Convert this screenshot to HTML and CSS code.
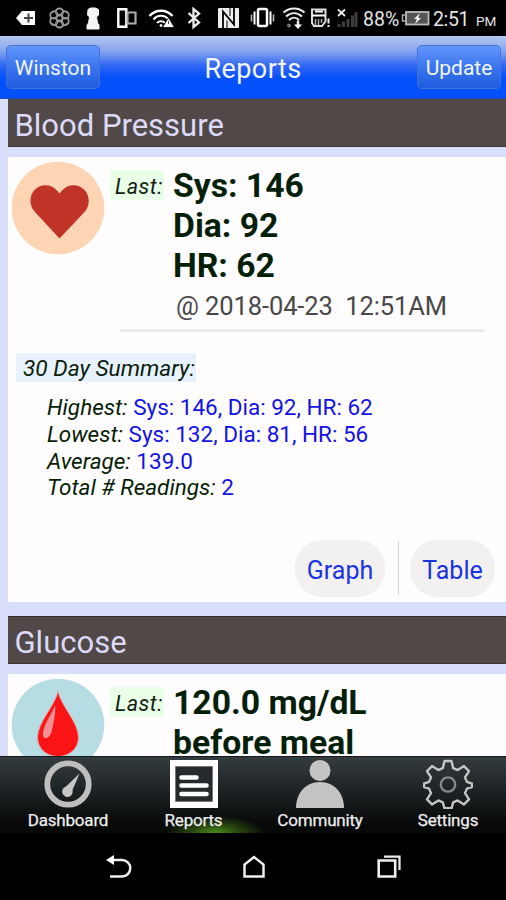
FILE: index.html
```html
<!DOCTYPE html>
<html lang="en">
<head>
<meta charset="utf-8">
<title>Reports</title>
<link rel="stylesheet" href="styles.css">
</head>
<body>
<div class="screen">
  <div class="status">
    <svg class="ico" width="42" height="36" viewBox="0 0 42 36"><path d="M16 18l6-7h13v14H22z" fill="#fff"/><path d="M24 18h9M28.500 13.500v9" stroke="#444" stroke-width="2"/></svg>
    <svg class="ico" width="36" height="36" viewBox="42 0 36 36" fill="none" stroke="#999" stroke-width="1.400"><path d="M59.500 8.500l9 4.800v9.600l-9 4.800-9-4.800v-9.600z"/><circle cx="59.500" cy="18" r="3.500"/><circle cx="59.500" cy="12" r="3.800"/><circle cx="59.500" cy="24" r="3.800"/><circle cx="54" cy="15" r="3.800"/><circle cx="65" cy="15" r="3.800"/><circle cx="54" cy="21.500" r="3.800"/><circle cx="65" cy="21.500" r="3.800"/></svg>
    <svg class="ico" width="32" height="36" viewBox="78 0 32 36"><path d="M88 9.500L90.500 8h5L98.500 9.500v5.500l-2 2 1 6 1.500 2V29h-12v-4l1.500-2 1-6-2-2z" fill="#f4f4f4" stroke="#f4f4f4" stroke-linejoin="round"/></svg>
    <svg class="ico" width="34" height="36" viewBox="110 0 34 36" fill="none"><path d="M118.300 9.200h8v17.600h-8z" stroke="#fff" stroke-width="2.400"/><path d="M127.500 12.500h8v11h-8z" stroke="#aaa" stroke-width="2.200"/></svg>
    <svg class="ico" width="36" height="36" viewBox="144 0 36 36" fill="none" stroke="#fff"><path d="M149.500 16c6-7 17-7 23 0" stroke-width="2.400"/><path d="M153.500 19.500c4-5 11-5 15 0" stroke-width="2.200"/><path d="M157 23c2-2.500 6-2.500 8 0" stroke-width="2"/><circle cx="161" cy="25.500" r="1" fill="#fff"/><path d="M168.500 17.500l6 10h-12z" fill="#fff" stroke="#000" stroke-width=".8"/><path d="M168.500 21v3" stroke="#444" stroke-width="1"/></svg>
    <svg class="ico" width="33" height="36" viewBox="180 0 33 36" fill="none"><path d="M188.500 13l10.500 9.500-5.500 4.500V9l5.500 4.500-10.500 9.500" stroke="#eee" stroke-width="2.300"/></svg>
    <svg class="ico" width="34" height="36" viewBox="213 0 34 36"><rect x="218" y="8" width="21" height="20" rx="1" fill="#eee"/><path d="M223 28V11.500l11 13V8" fill="none" stroke="#000" stroke-width="1.800"/><path d="M227 28V20.500M230 8v8" fill="none" stroke="#444" stroke-width="1.400"/></svg>
    <svg class="ico" width="34" height="36" viewBox="247 0 34 36" fill="none" stroke="#fff"><rect x="258" y="9" width="9" height="17" rx="1.500" stroke-width="2.500"/><path d="M254.500 11.500v13M270.500 11.500v13" stroke-width="2"/><path d="M251.500 14.500v7M273.500 14.500v7" stroke="#bbb" stroke-width="1.600"/></svg>
    <svg class="ico" width="27" height="36" viewBox="281 0 27 36" fill="none" stroke="#eee"><path d="M283.500 12.500c6-5.500 15-5.500 21 0M286 16.500c5-4.500 11-4.500 16 0M289 20c3-3 7-3 10 0" stroke-width="2"/><circle cx="289" cy="25.500" r="1.900" fill="#777" stroke="none"/><path d="M298 20.500v5" stroke-width="2.500"/><path d="M294 24.500h8l-4 4.500z" fill="#fff" stroke="none"/></svg>
    <svg class="ico" width="24" height="36" viewBox="308 0 24 36" fill="none"><path d="M312 9.500h13.500v12L322 26h-8l-2-3z" stroke="#ddd" stroke-width="2"/><path d="M312 15.500h13M315 11.500h8" stroke="#fff" stroke-width="2"/><path d="M315.500 19v6M318.500 19v6M321.500 19v4" stroke="#aaa" stroke-width="1.500"/><path d="M328.500 18.500v5M328.500 25v2" stroke="#eee" stroke-width="2"/></svg>
    <svg class="ico" width="30" height="36" viewBox="332 0 30 36" fill="none"><path d="M338 9.500l7 6.500M345 9.500l-7 6.500" stroke="#eee" stroke-width="1.800"/><path d="M339 24v3M343.500 21.500v5.500M348 19v8M352.500 15.500V27M356 12v15" stroke="#3c3c3c" stroke-width="3"/></svg>
    <span class="pct">88%</span>
    <svg class="ico batt" width="30" height="36" viewBox="401 0 30 36"><rect x="406" y="12" width="22.500" height="12.500" fill="#555" stroke="#bbb" stroke-width="1.800"/><path d="M405 15h-2.500v6h2.500" fill="none" stroke="#aaa" stroke-width="1.500"/><path d="M420 13l-6 6h3l-2 5 6-6h-3z" fill="#fff"/></svg>
    <span class="time">2:51</span><span class="pm">PM</span>
  </div>
  <header class="bar">
    <a class="btn left">Winston</a>
    <h1>Reports</h1>
    <a class="btn right">Update</a>
  </header>
  <main>
    <h2>Blood Pressure</h2>
    <section class="card bp">
      <div class="top">
        <svg class="badge" width="94" height="94" viewBox="0 0 94 94"><circle cx="47" cy="47" r="46.300" fill="#fdd5b5"/><path d="M48.500 77.500L23.500 50.500C18 44 18.500 35 23 29.500c6-7 17-7 23 0l2.500 3 2.500-3c6-7 17-7 23 0 4.500 5.500 5.500 14.500 0 21z" fill="#c03427"/></svg>
        <span class="last">Last:</span>
        <div class="values"><b>Sys: 146</b><b>Dia: 92</b><b>HR: 62</b><span class="when">@ 2018-04-23&nbsp; 12:51AM</span></div>
      </div>
      <div class="rule"></div>
      <div class="sumtitle">30 Day Summary:</div>
      <div class="summary">
        <p><i>Highest:</i> <span>Sys: 146, Dia: 92, HR: 62</span></p>
        <p><i>Lowest:</i> <span>Sys: 132, Dia: 81, HR: 56</span></p>
        <p><i>Average:</i> <span>139.0</span></p>
        <p><i>Total # Readings:</i> <span>2</span></p>
      </div>
      <div class="actions"><a class="pill">Graph</a><span class="sep"></span><a class="pill table">Table</a></div>
    </section>
    <h2 class="second">Glucose</h2>
    <section class="card">
      <div class="top">
        <svg class="badge" width="94" height="94" viewBox="0 0 94 94"><circle cx="47" cy="47" r="46.300" fill="#b6dde3"/><path d="M47 13c3 15 20.500 31 20.500 46.500C67.500 71 58 78.500 47 78.500S26.500 71 26.500 59.500C26.500 44 44 28 47 13z" fill="#fb1415" stroke="#ddb0ad" stroke-width="1"/><path d="M44 27c-3 10-13 20-12 31 2 5 8 1 9-6 2-9 4-17 3-25z" fill="#f2a5a8" opacity=".85"/></svg>
        <span class="last">Last:</span>
        <div class="values"><b>120.0 mg/dL</b><b>before meal</b></div>
      </div>
    </section>
  </main>
  <nav class="tabs">
    <a class="tab"><svg width="50" height="50" viewBox="0 0 50 50"><circle cx="25" cy="25" r="20.700" fill="none" stroke="#bfbfbf" stroke-width="5.800"/><path d="M36.500 14.500L29.500 31a5.300 5.300 0 1 1-6.500-3.500z" fill="#c6c6c6"/></svg><span>Dashboard</span></a>
    <a class="tab active"><svg width="50" height="50" viewBox="0 0 50 50"><path d="M1 1h48v48H1z" fill="#fff"/><path d="M6.500 7.500h37v35h-37z" fill="#252b2d" stroke="#777" stroke-width="1"/><path d="M12.500 18.500h15M12.500 26.500h25M12.500 35h25" stroke="#fff" stroke-width="4.600" stroke-linecap="round"/></svg><span>Reports</span></a>
    <a class="tab"><svg width="50" height="50" viewBox="0 0 50 50" fill="#c3c3c3"><circle cx="25" cy="11.500" r="10.500"/><path d="M1 49c0-14 9-26 24-26s24 12 24 26z"/></svg><span>Community</span></a>
    <a class="tab"><svg width="50" height="50" viewBox="0 0 50 50" fill="none"><path d="M21.500 2h7l1.700 7.200 4.500 1.900 6.300-4 5 5-4 6.300 1.900 4.500 5 1.600v3.500l-5 1.600-1.900 4.500 4 6.300-5 5-6.300-4-4.500 1.900-1.700 6h-7l-1.700-6-4.500-1.900-6.300 4-5-5 4-6.300-1.900-4.500-5-1.600v-3.500l5-1.600 1.900-4.500-4-6.300 5-5 6.300 4 4.500-1.900z" stroke="#c4c4c4" stroke-width="2.400" stroke-linejoin="round"/><circle cx="25" cy="25.500" r="7.200" stroke="#888" stroke-width="2.300"/></svg><span>Settings</span></a>
  </nav>
  <div class="sysnav">
    <svg width="26" height="24" viewBox="0 0 26 24" fill="none"><path d="M6 5h10a8 8 0 0 1 0 16.500H4" stroke="#eee" stroke-width="2.500"/><path d="M0 5l8-5v10z" fill="#fff"/></svg>
    <svg width="23" height="24" viewBox="0 0 23 24" fill="none"><path d="M1.500 21.500V9.500l9.500-7.500 9.500 7.500v12z" stroke="#eee" stroke-width="2.500"/></svg>
    <svg width="24" height="24" viewBox="0 0 24 24" fill="none" stroke="#eee"><path d="M1.700 5.500h16.500v16H1.700z" stroke-width="2.600"/><path d="M7 1.700h15.500V15" stroke-width="2.200"/></svg>
  </div>
</div>
</body>
</html>
```
FILE: styles.css
```css
* { box-sizing: border-box; }
body { margin: 0; font-family: Roboto, "Liberation Sans", sans-serif; background: #000; }
h1, h2, p { margin: 0; font-weight: 400; }
svg { display: block; flex: none; }
.screen { width: 506px; height: 900px; display: flex; flex-direction: column; overflow: hidden; }

.status { height: 36px; flex: none; display: flex; color: #e4e4e4; font-size: 19.500px; line-height: 39px; white-space: nowrap; }
.pct { width: 39px; padding-left: 1px; }
.time { width: 44px; padding-left: 1px; letter-spacing: -.4px; margin-left: 1px; }
.pm { font-size: 13.500px; line-height: 42px; }

.bar { height: 63px; flex: none; display: flex; align-items: flex-start; justify-content: space-between; padding: 9px 5px 0 6px; color: #f4f6ff; background: linear-gradient(#b6c7ee 0, #86a5ef 24%, #2f66f2 48%, #0450fb 68%, #0450fb 100%); border-bottom: 1px solid #1c4ac0; }
.bar h1 { font-size: 27px; line-height: 48px; letter-spacing: .45px; margin-right: 11px; }
.btn { height: 44px; border: 1px solid #4274d0; border-radius: 5px; background: linear-gradient(#6496fa, #3a75ee 50%, #1f5ddf); font-size: 21px; line-height: 44px; text-align: center; white-space: nowrap; }
.left { width: 94px; }
.right { width: 84px; }

main { flex: 1; min-height: 0; overflow: hidden; background: #d9dffb; padding-left: 8px; }
h2 { height: 48px; background: #504948; color: #dcdaf8; font-size: 31px; line-height: 53px; padding-left: 6.500px; border-bottom: 1px solid #3d3635; }
.second { margin-top: 14px; border-top: 1px solid #3e2b20; line-height: 51px; margin-bottom: 1px; }
.card { background: #fffdfe; margin-top: 10px; }
.bp { height: 445px; }
.top { display: flex; align-items: flex-start; padding: 4px 0 0 3px; }
.last { width: 54px; height: 30px; margin: 9px 0 0 5px; padding-left: 5px; background: #e9ffe7; font-size: 21.500px; line-height: 33px; font-style: italic; color: #122012; letter-spacing: .5px; }
.values { display: flex; flex-direction: column; margin: 5px 0 0 9px; color: #031f08; white-space: nowrap; }
.values b { font-size: 33.700px; line-height: 40px; }
.values .when { font-size: 25.500px; line-height: 40px; color: #484848; padding-left: 3px; letter-spacing: -.1px; }
.rule { height: 3px; background: #ececec; margin: 3px 22px 0 112px; }
.sumtitle { width: 180px; height: 29px; margin: 21px 0 0 8px; padding-left: 7px; background: #e8f2fd; color: #0c200c; font-style: italic; font-size: 22.700px; line-height: 32px; white-space: nowrap; }
.summary { margin: 12px 0 0 39px; font-size: 22.500px; line-height: 26.800px; color: #061d06; white-space: nowrap; }
.summary span { color: #1212e8; }
.actions { display: flex; justify-content: flex-end; align-items: center; margin: 38.500px 11px 0 0; }
.pill { width: 90px; height: 57px; border-radius: 27px; background: #f2f0f0; color: #1a34e0; font-size: 25px; line-height: 62px; text-align: center; }
.table { width: 85px; }
.sep { width: 1px; height: 54px; background: #d4d4d8; margin: 0 11px 0 13px; }

.tabs { height: 77px; flex: none; display: grid; grid-template-columns: 126px 125px 128px 128px; padding: 2px 0 0 5px; border-top: 1px solid #161a1c; color: #eee; background: radial-gradient(ellipse 50px 17px at 215px 100%, #4d8e1c 0, rgba(60,110,20,.65) 45%, transparent 100%), linear-gradient(#343c40, #1d2224 45%, #070808 90%); }
.tab { display: flex; flex-direction: column; align-items: center; font-size: 17px; letter-spacing: -.2px; line-height: 22px; -webkit-text-stroke: .25px #eee; }
.sysnav { height: 67px; flex: none; background: #000; display: flex; padding: 22px 0 0 106px; gap: 111px; }
```
